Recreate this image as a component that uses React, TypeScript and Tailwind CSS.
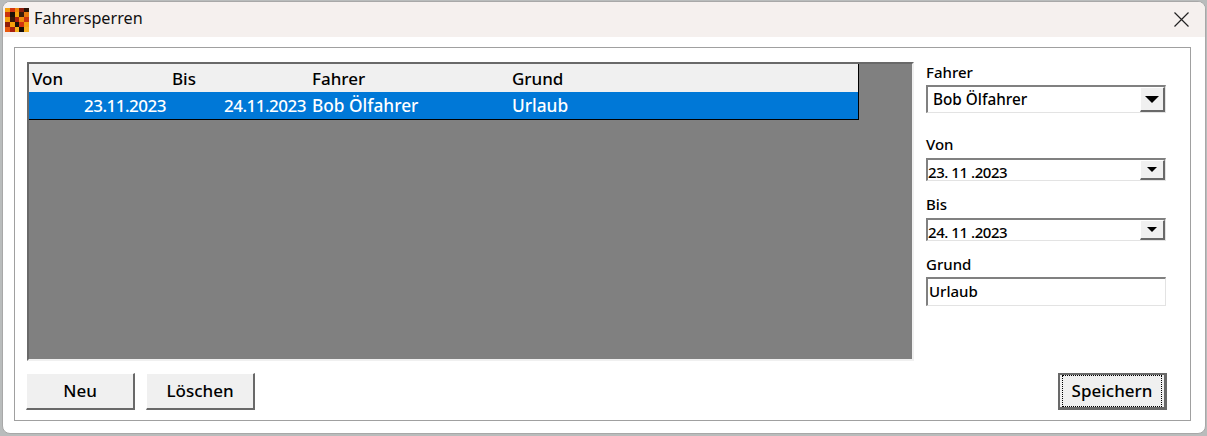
const font = { fontFamily: '"Noto Sans", Tahoma, sans-serif' };

function Logo() {
  const colors = [
    "#f59e0b", "#d2340f", "#f08a0c", "#8f1d0a", "#2a1408",
    "#c9330e", "#1c0f08", "#f5a10f", "#3a1a0a", "#e8790e",
    "#f5a10f", "#3a1508", "#a91e0c", "#f08a0c", "#c9330e",
    "#8f1d0a", "#f59e0b", "#1c0f08", "#d2340f", "#f5a10f",
    "#e8590e", "#a91e0c", "#f7b120", "#170c08", "#f7b120",
  ];
  return (
    <div className="grid grid-cols-5 w-[24px] h-[24px] shrink-0">
      {colors.map((c, i) => (
        <div key={i} style={{ background: c }} />
      ))}
    </div>
  );
}

function Arrow({ big }: { big?: boolean }) {
  return (
    <div className="flex-1 flex items-center justify-center">
      {big ? (
        <div className="w-0 h-0 border-x-[7px] border-x-transparent border-t-[7px] border-t-black" />
      ) : (
        <div className="w-0 h-0 border-x-[5px] border-x-transparent border-t-[5px] border-t-black" />
      )}
    </div>
  );
}

function Combo({ big, children }: { big?: boolean; children: React.ReactNode }) {
  return (
    <div
      className={`flex ${big ? "h-[28px]" : "h-[23px]"} border-t-2 border-l-2 border-t-[#808080] border-l-[#808080] border-b border-r border-b-[#e3e3e3] border-r-[#e3e3e3] bg-white`}
    >
      <div
        className={`flex-1 font-medium leading-none flex ${
          big ? "text-[15.3px] items-center pl-[5px]" : "text-[15px] tracking-[-0.45px] items-end pl-0"
        } text-black`}
      >
        {children}
      </div>
      <div className="w-[25px] flex bg-[#f0f0f0] border-r-2 border-b-2 border-r-[#696969] border-b-[#696969] border-t border-t-white border-l border-l-white">
        <Arrow big={big} />
      </div>
    </div>
  );
}

function Btn({ children, def }: { children: React.ReactNode; def?: boolean }) {
  return (
    <button
      className={`w-[109px] h-[37px] bg-[#f0f0f0] text-[17px] font-medium text-black flex items-center justify-center ${
        def
          ? "border-2 border-[#696969] border-b-[3px] border-r-[3px]"
          : "border-r-2 border-b-2 border-r-[#696969] border-b-[#696969] border-t border-l border-t-white border-l-white"
      }`}
    >
      {def ? (
        <span className="w-full h-full m-[2px] border border-dotted border-black flex items-center justify-center">
          {children}
        </span>
      ) : (
        children
      )}
    </button>
  );
}

const cols = ["w-[140px]", "w-[140px]", "w-[200px]", "flex-1"];

export default function App() {
  return (
    <div className="w-[1207px] h-[436px] bg-[#b9bcbc] pt-[1px] pl-[2px] pr-[1px] pb-[2px] overflow-hidden" style={font}>
      <div className="w-full h-full rounded-[8px] bg-white border border-[#a8a8a8] flex flex-col overflow-hidden">
        <div className="h-[35px] bg-[#f5f0ee] flex items-center pl-[2px] pr-[16px] shrink-0">
          <Logo />
          <span className="ml-[5px] text-[16.2px] leading-none pb-[2px] text-[#111]">Fahrersperren</span>
          <svg className="ml-auto -mt-[1px]" width="15" height="15" viewBox="0 0 15 15" fill="none" stroke="#222" strokeWidth="1.2">
            <path d="M0.5 0.5 L14.5 14.5 M14.5 0.5 L0.5 14.5" />
          </svg>
        </div>
        <div className="flex-1 pt-[10px] pl-[11px] pr-[14px] pb-[12px]">
          <div className="w-full h-full border border-[#a0a0a0] pt-[14px] pl-[11px] pr-[23px] pb-[10px] flex flex-col">
            <div className="flex gap-[12px] h-[299px] ml-[1px]">
              <div className="w-[887px] bg-[#808080] border-t-2 border-l-2 border-t-[#696969] border-l-[#696969] border-b-2 border-r-2 border-b-[#f0f0f0] border-r-[#f0f0f0]">
                <div className="w-[830px] border-r border-b border-black text-[17px] font-medium">
                  <div className="h-[28px] bg-[#f0f0f0] flex items-center pl-[3px] pt-[1px] text-black">
                    {["Von", "Bis", "Fahrer", "Grund"].map((t, i) => (
                      <div key={t} className={cols[i]}>{t}</div>
                    ))}
                  </div>
                  <div className="h-[27px] bg-[#0078d7] flex items-center pl-[3px] pt-[1px] text-white">
                    <div className="w-[134px] text-right tracking-[-0.5px]">23.11.2023</div>
                    <div className="w-[140px] text-right tracking-[-0.5px]">24.11.2023</div>
                    <div className="w-[206px] pl-[6px] text-[17.3px]">Bob Ölfahrer</div>
                    <div className="flex-1 text-[17.3px]">Urlaub</div>
                  </div>
                </div>
              </div>
              <div className="w-[240px] flex flex-col text-[15px] font-medium text-black">
                <div className="h-[23px] leading-[20px]">Fahrer</div>
                <Combo big>Bob Ölfahrer</Combo>
                <div className="h-[45px] pt-[21px] leading-[20px]">Von</div>
                <Combo>23. 11 .2023</Combo>
                <div className="h-[37px] pt-[13px] leading-[20px]">Bis</div>
                <Combo>24. 11 .2023</Combo>
                <div className="h-[36px] pt-[13px] leading-[20px]">Grund</div>
                <div className="h-[29px] border-t-2 border-l-2 border-t-[#808080] border-l-[#808080] border-b border-r border-b-[#e3e3e3] border-r-[#e3e3e3] pl-[1px] pb-[2px] flex items-center">
                  Urlaub
                </div>
              </div>
            </div>
            <div className="mt-auto flex gap-[11px]">
              <Btn>Neu</Btn>
              <Btn>Löschen</Btn>
              <div className="ml-auto">
                <Btn def>Speichern</Btn>
              </div>
            </div>
          </div>
        </div>
      </div>
    </div>
  );
}
